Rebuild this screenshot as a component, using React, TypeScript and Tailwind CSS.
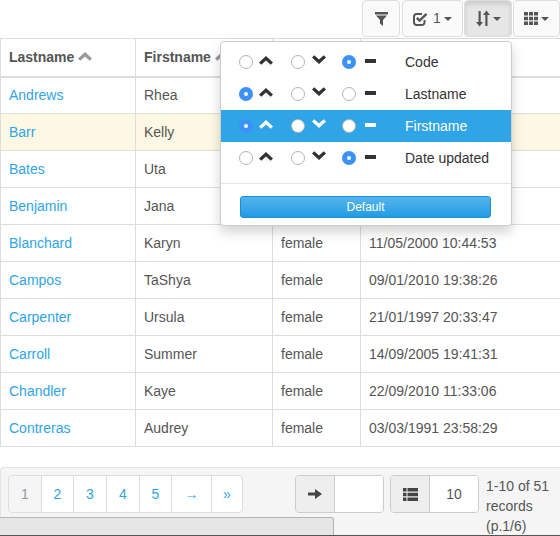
const people = [
  ['Andrews', 'Rhea', '', ''],
  ['Barr', 'Kelly', '', ''],
  ['Bates', 'Uta', '', ''],
  ['Benjamin', 'Jana', '', ''],
  ['Blanchard', 'Karyn', 'female', '11/05/2000 10:44:53'],
  ['Campos', 'TaShya', 'female', '09/01/2010 19:38:26'],
  ['Carpenter', 'Ursula', 'female', '21/01/1997 20:33:47'],
  ['Carroll', 'Summer', 'female', '14/09/2005 19:41:31'],
  ['Chandler', 'Kaye', 'female', '22/09/2010 11:33:06'],
  ['Contreras', 'Audrey', 'female', '03/03/1991 23:58:29'],
];

const sortRows = [
  { label: 'Code', picked: 2 },
  { label: 'Lastname', picked: 0 },
  { label: 'Firstname', picked: 0, active: true },
  { label: 'Date updated', picked: 2 },
];

function Chevron({ up, className }: { up: boolean; className: string }) {
  return (
    <svg width="14" height="9" viewBox="0 0 14 9" className={className}>
      <path
        d={up ? 'M7 0 14 6.400 11.700 8.800 7 4.400 2.300 8.800 0 6.400Z' : 'M7 9 14 2.600 11.700 .2 7 4.600 2.300 .2 0 2.600Z'}
        fill="currentColor"
      />
    </svg>
  );
}

function Caret() {
  return <span className="ml-[3px] inline-block border-x-[4px] border-t-[4px] border-x-transparent border-t-[#555]" />;
}

function Radio({ on }: { on: boolean }) {
  if (on) {
    return (
      <span className="flex h-[14px] w-[14px] items-center justify-center rounded-full bg-[#3a92f8]">
        <span className="h-[4px] w-[4px] rounded-full bg-white" />
      </span>
    );
  }
  return <span className="h-[14px] w-[14px] rounded-full border border-[#b4b4b4] bg-white" />;
}

function SortMenu() {
  return (
    <div className="absolute left-[220px] top-[41px] h-[185px] w-[292px] rounded-[4px] border border-[#ccc] bg-white pt-[4px] shadow-[0_6px_12px_rgba(0,0,0,0.175)]">
      {sortRows.map((row) => {
        const iconColor = row.active ? 'text-white' : 'text-[#333]';
        return (
          <div
            key={row.label}
            className={`flex h-[32px] items-center pl-[18px] ${row.active ? 'bg-[#2fa4e7] text-white' : 'text-[#333]'}`}
          >
            <div className="flex w-[52px] items-center gap-[6px]">
              <Radio on={row.picked === 0} />
              <Chevron up className={`mb-[3px] ${iconColor}`} />
            </div>
            <div className="flex w-[51px] items-center gap-[7px]">
              <Radio on={row.picked === 1} />
              <Chevron up={false} className={`mb-[5px] ${iconColor}`} />
            </div>
            <div className="flex w-[52px] items-center gap-[9px]">
              <Radio on={row.picked === 2} />
              <span className={`mb-[3px] h-[4px] w-[11px] ${row.active ? 'bg-white' : 'bg-[#333]'}`} />
            </div>
            <span className="ml-[11px]">{row.label}</span>
          </div>
        );
      })}
      <div className="mt-[9px] border-t border-[#e5e5e5] pl-[19px] pr-[20px] pt-[12px]">
        <button className="h-[22px] w-full rounded-[3px] border border-[#1b8fd6] bg-gradient-to-b from-[#54b4eb] to-[#1d9ce5] text-[12px] leading-[20px] text-white">
          Default
        </button>
      </div>
    </div>
  );
}

function Toolbar() {
  const btn = 'flex h-[37px] items-center justify-center rounded-[4px] border border-[#ddd] text-[#555]';
  return (
    <div className="flex h-[38px] justify-end gap-[1px]">
      <div className={`${btn} mr-[1px] w-[38px] bg-[#fafafa]`}>
        <svg width="13" height="14" viewBox="0 0 13 14" className="text-[#555]">
          <path d="M0 0h13v2.400H0ZM1 3.400h11L8 8v6L5 11.600V8Z" fill="currentColor" />
        </svg>
      </div>
      <div className={`${btn} w-[61px] bg-[#fafafa]`}>
        <svg width="15" height="14" viewBox="0 0 15 14" fill="none" className="text-[#555]">
          <path d="M11.500 8v2.500A2.500 2.500 0 0 1 9 13H3.500A2.500 2.500 0 0 1 1 10.500V4.500A2.500 2.500 0 0 1 3.500 2H9" stroke="currentColor" strokeWidth="2" />
          <path d="M3.800 5.800l2.800 2.800L13.500 1.800" stroke="currentColor" strokeWidth="2.400" />
        </svg>
        <span className="ml-[5px]">1</span>
        <Caret />
      </div>
      <div className={`${btn} w-[48px] bg-[#e6e6e6] shadow-[inset_0_3px_5px_rgba(0,0,0,0.125)]`}>
        <svg width="14" height="17" viewBox="0 0 14 17" className="text-[#555]">
          <path d="M2.500 1h2.200v11H7L3.600 16.500 0 12h2.500ZM9.300 16h2.200V5H14L10.400 .5 7 5h2.300Z" fill="currentColor" />
        </svg>
        <Caret />
      </div>
      <div className={`${btn} w-[47px] bg-[#fafafa]`}>
        <svg width="14" height="13" viewBox="0 0 14 13" className="text-[#555]">
          <path d="M0 0h4v3.500H0ZM5 0h4v3.500H5ZM10 0h4v3.500h-4ZM0 4.750h4v3.500H0ZM5 4.750h4v3.500H5ZM10 4.750h4v3.500h-4ZM0 9.500h4V13H0ZM5 9.500h4V13H5ZM10 9.500h4V13h-4Z" fill="currentColor" />
        </svg>
        <Caret />
      </div>
    </div>
  );
}

function PeopleTable() {
  const cell = 'border border-[#ddd] px-[8px] h-[37px] align-middle';
  return (
    <table className="w-[560px] table-fixed border-collapse">
      <colgroup>
        <col className="w-[135px]" />
        <col className="w-[137px]" />
        <col className="w-[88px]" />
        <col className="w-[200px]" />
      </colgroup>
      <thead>
        <tr className="h-[38px] text-left text-[#555]">
          {['Lastname', 'Firstname', '', ''].map((h, i) => (
            <th key={i} className="border border-b-2 border-[#ddd] px-[8px] font-bold">
              {h}
              {i < 2 && <Chevron up className="ml-[4px] inline-block align-[1px] text-[#999]" />}
            </th>
          ))}
        </tr>
      </thead>
      <tbody>
        {people.map((p, i) => (
          <tr key={p[0]} className={i === 1 ? 'bg-[#fcf8e3]' : ''}>
            <td className={`${cell} text-[#2fa4e7]`}>{p[0]}</td>
            <td className={cell}>{p[1]}</td>
            <td className={cell}>{p[2]}</td>
            <td className={cell}>{p[3]}</td>
          </tr>
        ))}
      </tbody>
    </table>
  );
}

function Footer() {
  const pages = [
    { t: '1', w: 'w-[32px]' },
    { t: '2', w: 'w-[32px]' },
    { t: '3', w: 'w-[33px]' },
    { t: '4', w: 'w-[33px]' },
    { t: '5', w: 'w-[32px]' },
    { t: '→', w: 'w-[40px]' },
    { t: '»', w: 'w-[31px]' },
  ];
  return (
    <div className="mt-[20px] flex h-[69px] rounded-tl-[4px] border-l border-t border-[#e3e3e3] bg-[#f5f5f5] pl-[7px] pt-[7px]">
      <div className="flex h-[38px] w-[235px] overflow-hidden rounded-[4px] border border-[#ddd] bg-white">
        {pages.map((p, i) => (
          <div
            key={p.t}
            className={`flex items-center justify-center ${p.w} ${i > 0 ? 'border-l border-[#ddd] text-[#2fa4e7]' : 'bg-[#f5f5f5] text-[#999]'}`}
          >
            {p.t}
          </div>
        ))}
      </div>
      <div className="ml-[52px] flex h-[38px] w-[89px] overflow-hidden rounded-[4px] border border-[#ccc]">
        <div className="flex w-[39px] items-center justify-center border-r border-[#ccc] bg-[#eee] text-[#444]">
          <svg width="14" height="12" viewBox="0 0 14 12">
            <path d="M0 4.500h7V1l7 5-7 5V7.500H0Z" fill="currentColor" />
          </svg>
        </div>
        <div className="flex-1 bg-white" />
      </div>
      <div className="ml-[6px] flex h-[38px] w-[89px] overflow-hidden rounded-[4px] border border-[#ccc]">
        <div className="flex w-[39px] items-center justify-center border-r border-[#ccc] bg-[#eee] text-[#444]">
          <svg width="15" height="13" viewBox="0 0 15 13">
            <path d="M0 0h3.500v3.500H0ZM4.500 0H15v3.500H4.500ZM0 4.750h3.500v3.500H0ZM4.500 4.750H15v3.500H4.500ZM0 9.500h3.500V13H0ZM4.500 9.500H15V13H4.500Z" fill="currentColor" />
          </svg>
        </div>
        <div className="flex flex-1 items-center justify-center bg-white text-[#555]">10</div>
      </div>
      <div className="ml-[7px] w-[74px] pt-[1px] leading-[20px] text-[#555]">1-10 of 51 records (p.1/6)</div>
    </div>
  );
}

export default function App() {
  return (
    <div className="relative h-[536px] w-[560px] overflow-hidden bg-white font-['Liberation_Sans',Arial,sans-serif] text-[14px] text-[#555]">
      <Toolbar />
      <PeopleTable />
      <Footer />
      <SortMenu />
      <div className="absolute bottom-0 left-0 h-[19px] w-[334px] rounded-tr-[3px] border-r border-t border-[#b5b5b5] bg-[#e6e6e6]" />
      <div className="absolute bottom-0 left-0 h-[1px] w-[560px] bg-[#555]" />
    </div>
  );
}
